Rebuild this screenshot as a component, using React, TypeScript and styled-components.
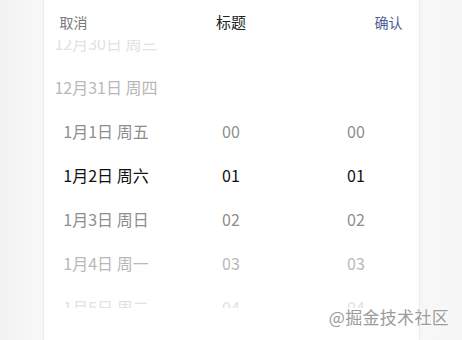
import React from "react";
import styled, { createGlobalStyle } from "styled-components";

const GlobalStyle = createGlobalStyle`
  html, body {
    margin: 0;
    padding: 0;
    background: #f7f7f7;
  }
  body {
    font-family: "Noto Sans CJK SC", "Noto Sans", sans-serif;
    -webkit-font-smoothing: antialiased;
  }
`;

const Page = styled.div`
  position: relative;
  width: 462px;
  height: 340px;
  overflow: hidden;
  display: flex;
  justify-content: center;
  background: linear-gradient(90deg, #f2f2f2 0%, #f8f8f8 8%, #f7f7f7 100%);
`;

const Card = styled.div`
  width: 375px;
  height: 340px;
  background: #ffffff;
  box-shadow: 0 0 0 1px #ececec, 0 0 6px rgba(0, 0, 0, 0.03);
  display: flex;
  flex-direction: column;
`;

const Header = styled.div`
  height: 40px;
  padding: 3px 16px 0;
  box-sizing: border-box;
  display: grid;
  grid-template-columns: 1fr auto 1fr;
  align-items: center;
  font-size: 14px;
  line-height: 20px;
`;

const HeaderButton = styled.span<{ $tone: "cancel" | "confirm" }>`
  color: ${(p) => (p.$tone === "cancel" ? "#7a7a7a" : "#4a5d92")};
  justify-self: ${(p) => (p.$tone === "cancel" ? "start" : "end")};
`;

const Title = styled.span`
  color: #222222;
  font-size: 15px;
`;

const Picker = styled.div`
  height: 268px;
  overflow: hidden;
  display: grid;
  grid-template-columns: repeat(3, 1fr);
`;

const Column = styled.div`
  display: flex;
  flex-direction: column;
  align-items: center;
`;

const Item = styled.div<{ $dist: number }>`
  height: 44px;
  line-height: 44px;
  font-size: 16px;
  white-space: nowrap;
  color: ${(p) =>
    p.$dist === 0
      ? "#111111"
      : p.$dist === 1
      ? "#8e8e8e"
      : p.$dist === 2
      ? "#b8b8b8"
      : "#e2e2e2"};
`;

const Watermark = styled.div`
  position: absolute;
  right: 13px;
  bottom: 12px;
  font-size: 17px;
  line-height: 22px;
  color: #9c9c9c;
  text-shadow: 0 0 2px #ffffff, 0 0 2px #ffffff;
  letter-spacing: 0.3px;
`;

const ROW = 44;
const BASE_OFFSET = -19;

type Col = { items: string[]; selected: number };

const columns: Col[] = [
  {
    items: [
      "12月30日 周三",
      "12月31日 周四",
      "1月1日 周五",
      "1月2日 周六",
      "1月3日 周日",
      "1月4日 周一",
      "1月5日 周二",
    ],
    selected: 3,
  },
  { items: ["00", "01", "02", "03", "04"], selected: 1 },
  { items: ["00", "01", "02", "03", "04"], selected: 1 },
];

export default function App() {
  return (
    <>
      <GlobalStyle />
      <Page>
        <Card>
          <Header>
            <HeaderButton $tone="cancel">取消</HeaderButton>
            <Title>标题</Title>
            <HeaderButton $tone="confirm">确认</HeaderButton>
          </Header>
          <Picker>
            {columns.map((col, ci) => (
              <Column
                key={ci}
                style={{
                  transform: `translateY(${BASE_OFFSET + (3 - col.selected) * ROW}px)`,
                }}
              >
                {col.items.map((it, i) => (
                  <Item key={i} $dist={Math.abs(i - col.selected)}>
                    {it}
                  </Item>
                ))}
              </Column>
            ))}
          </Picker>
        </Card>
        <Watermark>@掘金技术社区</Watermark>
      </Page>
    </>
  );
}
